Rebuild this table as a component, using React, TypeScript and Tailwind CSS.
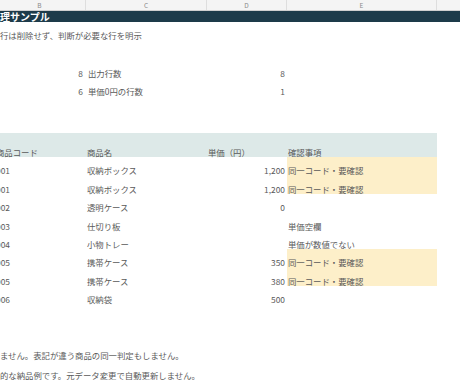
import React from "react";

interface Item {
  code: string;
  name: string;
  price: string;
  note: string;
  warn?: boolean;
}

const items: Item[] = [
  { code: "001", name: "収納ボックス", price: "1,200", note: "同一コード・要確認", warn: true },
  { code: "001", name: "収納ボックス", price: "1,200", note: "同一コード・要確認", warn: true },
  { code: "002", name: "透明ケース", price: "0", note: "" },
  { code: "003", name: "仕切り板", price: "", note: "単価空欄" },
  { code: "004", name: "小物トレー", price: "", note: "単価が数値でない" },
  { code: "005", name: "携帯ケース", price: "350", note: "同一コード・要確認", warn: true },
  { code: "005", name: "携帯ケース", price: "380", note: "同一コード・要確認", warn: true },
  { code: "006", name: "収納袋", price: "500", note: "" },
];

export default function App() {
  return (
    <div
      className="w-[460px] h-[380px] overflow-hidden bg-white text-[#5a5a5a] text-[8.4px]"
      style={{ fontFamily: '"Noto Sans CJK JP", "Noto Sans", sans-serif' }}
    >
      <div className="ml-[-6px] w-[480px]">
        {/* COLUMN LETTERS */}
        <div className="flex h-[11px] bg-[#f4f4f4] border-b border-[#cfcfcf] text-[6.5px] text-[#8a8a8a] leading-[10px]">
          <div className="w-[92px] text-center border-r border-[#dedede]">B</div>
          <div className="w-[121px] text-center border-r border-[#dedede]">C</div>
          <div className="w-[80px] text-center border-r border-[#dedede]">D</div>
          <div className="w-[150px] text-center border-r border-[#dedede]">E</div>
          <div className="flex-1" />
        </div>

        {/* TITLE */}
        <div className="h-[11px] bg-[#1d3b4a] pl-[6px] text-white font-bold text-[10px] leading-[11px]">
          理サンプル
        </div>

        {/* DESCRIPTION */}
        <div className="h-[18px] flex items-end pl-[6px] leading-[10px]">
          行は削除せず、判断が必要な行を明示
        </div>

        <div className="h-[19.5px]" />

        {/* SUMMARY */}
        {[
          ["8", "出力行数", "8"],
          ["6", "単価0円の行数", "1"],
        ].map(([n, label, v], i) => (
          <div key={i} className="flex h-[18px] items-end leading-[10px]">
            <div className="w-[92px] text-right pr-[3px]">{n}</div>
            <div className="w-[121px] pl-[2px]">{label}</div>
            <div className="w-[80px] text-right pr-[2px]">{v}</div>
          </div>
        ))}

        <div className="h-[37.5px]" />

        {/* TABLE HEADER */}
        <div className="flex h-[24px] items-end leading-[10px] pb-[0.5px]">
          <div className="flex w-[443px] h-full items-end bg-[#dde9e8]">
            <div className="w-[92px] pl-[2px]">商品コード</div>
            <div className="w-[121px] pl-[1px]">商品名</div>
            <div className="w-[80px] pl-[1px]">単価（円）</div>
            <div className="w-[150px] pl-[1px]">確認事項</div>
          </div>
        </div>

        {/* ROWS */}
        {items.map((item, index) => (
          <div key={index} className="flex h-[18.4px] leading-[10px]">
            <div className="w-[92px] pl-[2px] flex items-end">{item.code}</div>
            <div className="w-[121px] pl-[1px] flex items-end">{item.name}</div>
            <div className="w-[80px] pr-[2px] flex items-end justify-end">{item.price}</div>
            <div
              className={`w-[150px] pl-[1px] flex items-end ${
                item.warn ? "bg-[#fdefc9]" : ""
              }`}
            >
              {item.note}
            </div>
          </div>
        ))}

        <div className="h-[36.8px]" />

        {/* NOTES */}
        <div className="h-[19px] flex items-end pl-[6px] leading-[10px]">
          ません。表記が違う商品の同一判定もしません。
        </div>
        <div className="h-[20px] flex items-end pl-[6px] leading-[10px]">
          的な納品例です。元データ変更で自動更新しません。
        </div>
      </div>
    </div>
  );
}
